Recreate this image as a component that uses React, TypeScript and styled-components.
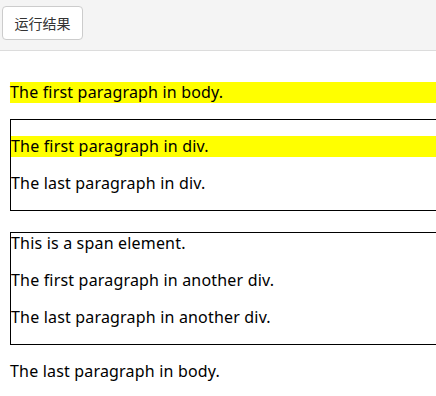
import React from "react";
import styled, { createGlobalStyle } from "styled-components";

const GlobalStyle = createGlobalStyle`
  html, body {
    margin: 0;
    padding: 0;
    background: #fff;
    overflow: hidden;
  }
  body {
    font-family: "Noto Sans", "Noto Sans CJK SC", sans-serif;
  }
`;

export default function App() {
  return (
    <Page>
      <GlobalStyle />
      <Toolbar>
        <RunButton>运行结果</RunButton>
      </Toolbar>
      <Frame>
        <Body>
          <Para highlight>The first paragraph in body.</Para>
          <Box>
            <Para highlight>The first paragraph in div.</Para>
            <Para>The last paragraph in div.</Para>
          </Box>
          <Box spaced>
            <Line>This is a span element.</Line>
            <Para>The first paragraph in another div.</Para>
            <Para>The last paragraph in another div.</Para>
          </Box>
          <Para>The last paragraph in body.</Para>
        </Body>
      </Frame>
    </Page>
  );
}

const Page = styled.div`
  width: 436px;
  height: 396px;
  overflow: hidden;
`;

const Toolbar = styled.div`
  display: flex;
  align-items: flex-start;
  height: 51px;
  padding: 6px 2px 0;
  box-sizing: border-box;
  background: #f4f4f4;
  border-bottom: 1px solid #dcdcdc;
`;

const RunButton = styled.button`
  width: 81px;
  height: 34px;
  padding: 0;
  background: #fff;
  border: 1px solid #cccccc;
  border-radius: 4px;
  font-family: "Noto Sans CJK SC", sans-serif;
  font-size: 14px;
  color: #333;
`;

const Frame = styled.div`
  overflow: hidden;
  padding: 15px 0 0 10px;
`;

const Body = styled.div`
  width: 440px;
  font-size: 16px;
  letter-spacing: 0.18px;
  line-height: 21px;
  color: #000;
`;

const Para = styled.p<{ highlight?: boolean }>`
  margin: 16px 0;
  background: ${(p) => (p.highlight ? "#ffff00" : "transparent")};
`;

const Line = styled.span`
  display: block;
`;

const Box = styled.div<{ spaced?: boolean }>`
  border: 1px solid #000;
  margin-top: ${(p) => (p.spaced ? "21px" : "0")};
`;
